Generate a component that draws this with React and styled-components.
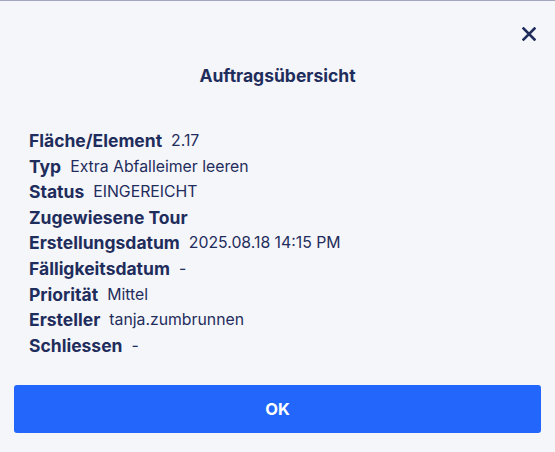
import * as React from "react";
import styled, { createGlobalStyle } from "styled-components";

const GlobalStyle = createGlobalStyle`
  html, body {
    margin: 0;
    padding: 0;
    background: #f5f6fa;
  }
`;

const Modal = styled.div`
  box-sizing: border-box;
  width: 555px;
  height: 452px;
  border-top: 1px solid #a3a8c2;
  background: #f5f6fa;
  padding: 0 14px;
  display: flex;
  flex-direction: column;
  color: #1f2d5c;
`;

const Header = styled.div`
  display: flex;
  justify-content: flex-end;
  padding-top: 24px;
  padding-right: 3px;
`;

const CloseButton = styled.button`
  border: 0;
  background: none;
  padding: 0;
  width: 18px;
  height: 18px;
  display: flex;
  align-items: center;
  justify-content: center;
  color: #1f2d5c;
  cursor: pointer;
`;

const Title = styled.h2`
  margin: 21px 0 0;
  text-align: center;
  font-family: Inter, "Liberation Sans", sans-serif;
  font-weight: 700;
  font-size: 17.5px;
  line-height: 24px;
`;

const List = styled.div`
  margin-top: 40px;
  padding-left: 15px;
  display: flex;
  flex-direction: column;
`;

const Row = styled.div`
  display: flex;
  align-items: baseline;
  gap: 9px;
  height: 25.6px;
`;

const Label = styled.span`
  font-family: Inter, "Liberation Sans", sans-serif;
  font-weight: 700;
  font-size: 17.5px;
  line-height: 25.6px;
`;

const Value = styled.span`
  position: relative;
  top: -1px;
  font-family: Inter, "Liberation Sans", sans-serif;
  font-size: 15.8px;
  line-height: 22px;
`;

const OkButton = styled.button`
  margin-top: auto;
  margin-bottom: 19px;
  height: 48px;
  width: 100%;
  border: 0;
  border-radius: 3px;
  background: #2366fb;
  color: #ffffff;
  font-family: Inter, "Liberation Sans", sans-serif;
  font-weight: 700;
  font-size: 16.5px;
  cursor: pointer;
`;

const rows = [
  ["Fläche/Element", "2.17"],
  ["Typ", "Extra Abfalleimer leeren"],
  ["Status", "EINGEREICHT"],
  ["Zugewiesene Tour", ""],
  ["Erstellungsdatum", "2025.08.18 14:15 PM"],
  ["Fälligkeitsdatum", "-"],
  ["Priorität", "Mittel"],
  ["Ersteller", "tanja.zumbrunnen"],
  ["Schliessen", "-"],
];

const App = () => (
  <>
    <GlobalStyle />
    <Modal>
      <Header>
        <CloseButton aria-label="Schliessen">
          <svg width="14" height="14" viewBox="0 0 14 14">
            <path
              d="M1.5 1.5 L12.5 12.5 M12.5 1.5 L1.5 12.5"
              stroke="currentColor"
              strokeWidth="2.6"
              strokeLinecap="square"
            />
          </svg>
        </CloseButton>
      </Header>
      <Title>Auftragsübersicht</Title>
      <List>
        {rows.map(([label, value]) => (
          <Row key={label}>
            <Label>{label}</Label>
            {value && <Value>{value}</Value>}
          </Row>
        ))}
      </List>
      <OkButton>OK</OkButton>
    </Modal>
  </>
);

export default App;
